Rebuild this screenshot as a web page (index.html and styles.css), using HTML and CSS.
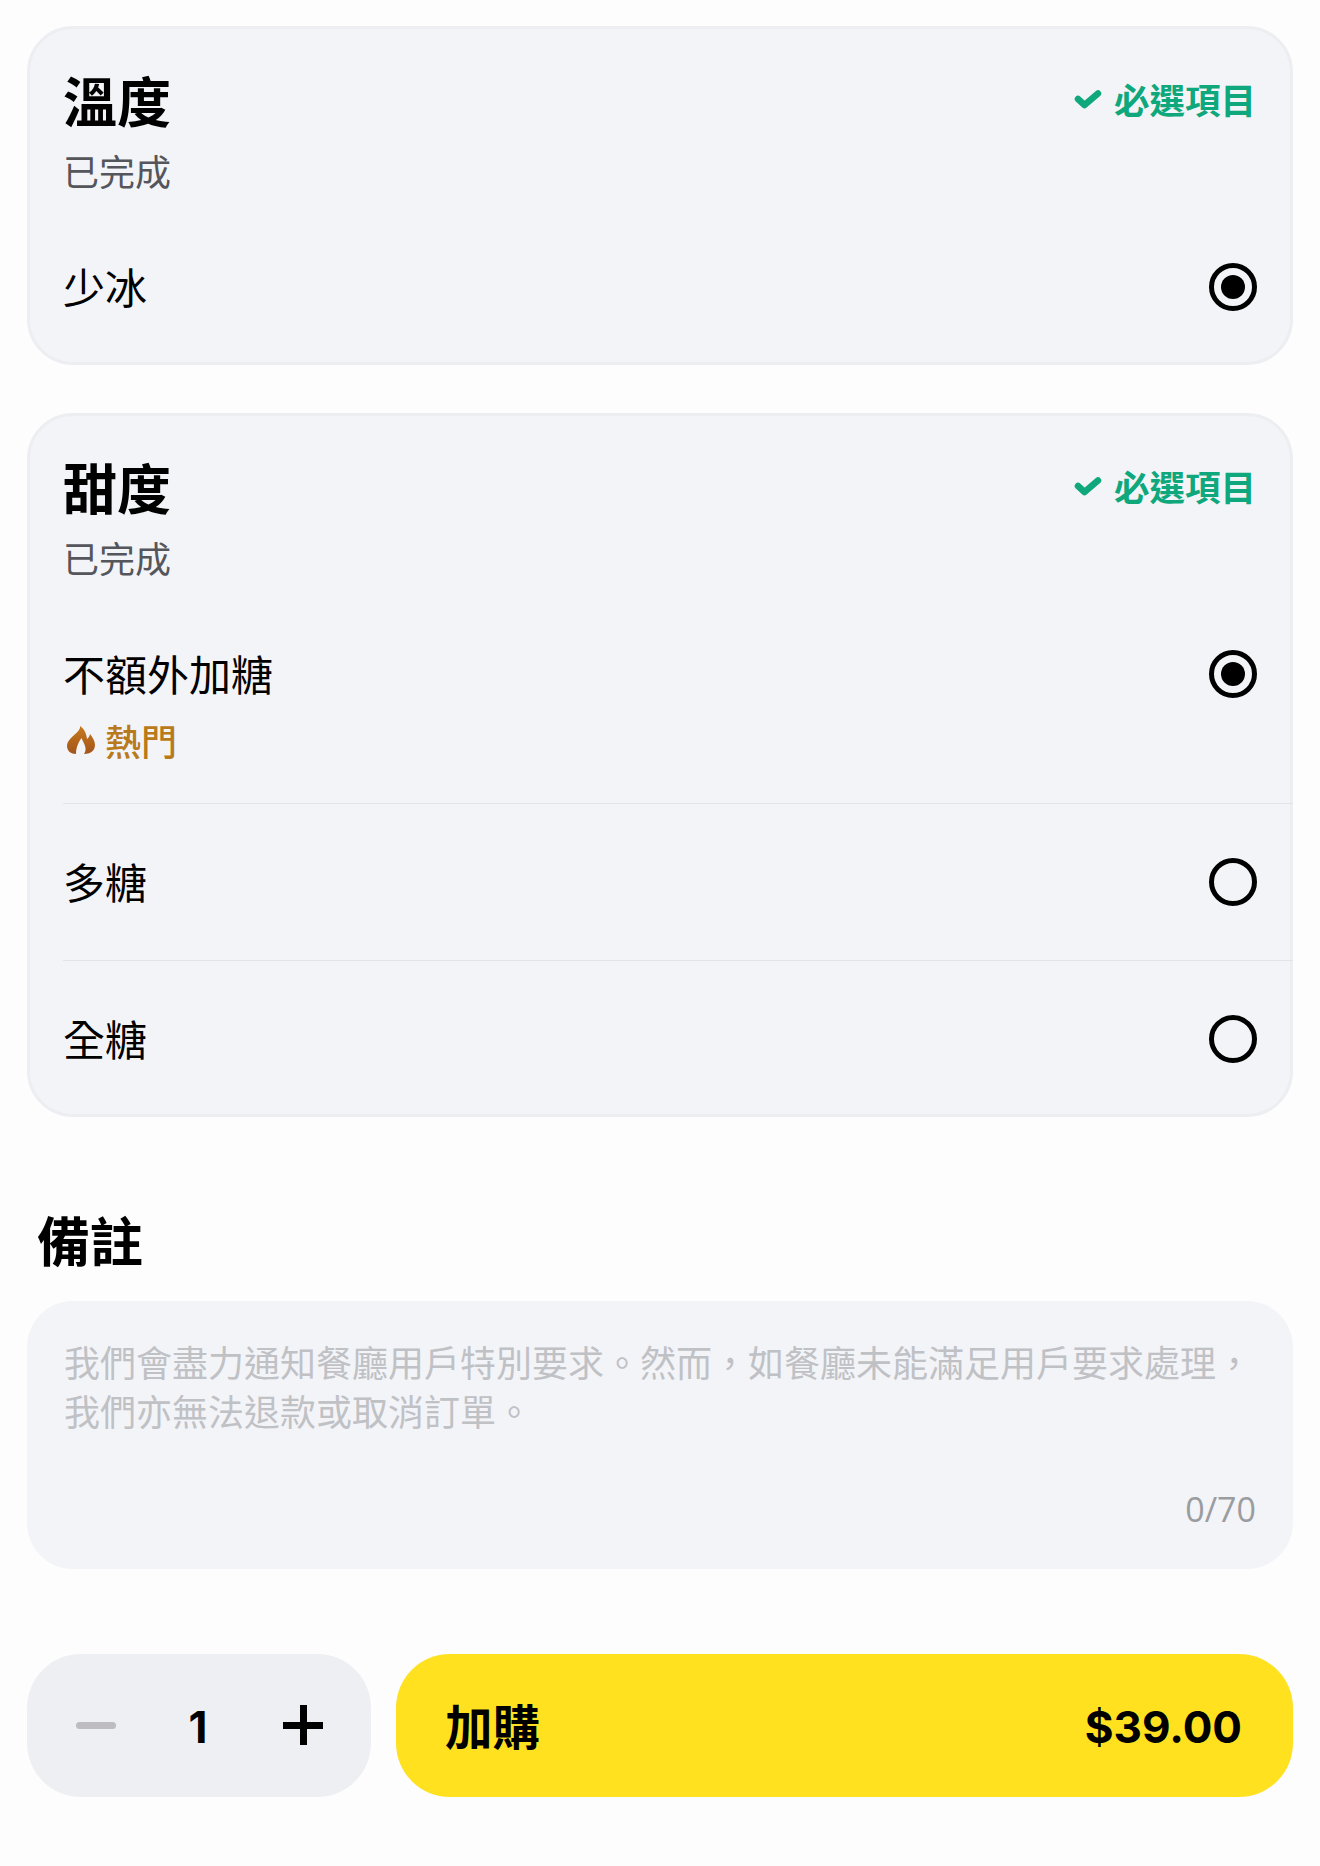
FILE: index.html
```html
<!DOCTYPE html>
<html lang="zh-Hant">
<head>
    <meta charset="UTF-8">
    <meta name="viewport" content="width=device-width, initial-scale=1.0">
    <title>加購</title>
    <link rel="stylesheet" href="styles.css">
</head>
<body>
    <section class="card">
        <div class="card-head">
            <div>
                <h2>溫度</h2>
                <p class="status">已完成</p>
            </div>
            <div class="required">
                <svg class="check" viewBox="0 0 28 20"><path d="M4 10 L10.5 16 L24 4.5" fill="none" stroke="#0fa87c" stroke-width="6.5" stroke-linecap="round" stroke-linejoin="round"/></svg>
                <span>必選項目</span>
            </div>
        </div>
        <div class="option first">
            <div class="option-text"><span class="name">少冰</span></div>
            <span class="radio on"></span>
        </div>
    </section>

    <section class="card">
        <div class="card-head">
            <div>
                <h2>甜度</h2>
                <p class="status">已完成</p>
            </div>
            <div class="required">
                <svg class="check" viewBox="0 0 28 20"><path d="M4 10 L10.5 16 L24 4.5" fill="none" stroke="#0fa87c" stroke-width="6.5" stroke-linecap="round" stroke-linejoin="round"/></svg>
                <span>必選項目</span>
            </div>
        </div>
        <div class="option tall">
            <div class="option-text">
                <span class="name">不額外加糖</span>
                <div class="hot">
                    <svg class="flame" viewBox="0 0 28 28">
                        <defs>
                            <linearGradient id="flame-fill" x1="0" y1="0" x2="0" y2="1">
                                <stop offset="0" stop-color="#c67a1c"/>
                                <stop offset="1" stop-color="#a3541a"/>
                            </linearGradient>
                        </defs>
                        <path d="M13 0 C14 4 8 8 4 12 C1.5 14.5 0 17 0 20 C0 25 4 28 9 28 C9 24 10 18 14.5 12 C15.5 15 18 18 18.5 22 C18.8 24.5 18 26.5 17 28 C23 28 28 25 28 19 C28 15 25.5 11 23 8 C22.5 10 21.5 12 20 13 C19.5 8 17.5 3 13 0 Z" fill="url(#flame-fill)"/>
                    </svg>
                    <span>熱門</span>
                </div>
            </div>
            <span class="radio on"></span>
        </div>
        <div class="option line">
            <div class="option-text"><span class="name">多糖</span></div>
            <span class="radio"></span>
        </div>
        <div class="option line">
            <div class="option-text"><span class="name">全糖</span></div>
            <span class="radio"></span>
        </div>
    </section>

    <h2 class="note-title">備註</h2>
    <div class="note">
        <p class="placeholder">我們會盡力通知餐廳用戶特別要求。然而&#xFF0C;如餐廳未能滿足用戶要求處理&#xFF0C;我們亦無法退款或取消訂單。</p>
        <div class="count">0/70</div>
    </div>

    <div class="bottom">
        <div class="stepper">
            <span class="minus"></span>
            <span class="qty">1</span>
            <span class="plus"></span>
        </div>
        <button class="buy">
            <span class="buy-label">加購</span>
            <span class="price">$39.00</span>
        </button>
    </div>
</body>
</html>
```

FILE: styles.css
```css
* {
    box-sizing: border-box;
}

body {
    font-family: "Noto Sans CJK TC", "Noto Sans", sans-serif;
    margin: 0;
    padding: 26px 27px 0;
    background-color: #fdfdfd;
    color: #000;
}

h2, p {
    margin: 0;
}

.card {
    background: #f3f4f8;
    border: 3px solid #eceef1;
    border-radius: 46px;
    margin-bottom: 48px;
    padding-left: 33px;
}

.card-head {
    display: flex;
    justify-content: space-between;
    align-items: flex-start;
    height: 180px;
    padding: 36px 34px 0 0;
}

.card-head h2 {
    font-size: 54px;
    font-weight: 700;
    line-height: 70px;
}

.status {
    font-size: 36px;
    line-height: 48px;
    margin-top: 11px;
    color: #55565b;
}

.required {
    display: flex;
    align-items: center;
    gap: 12px;
    height: 70px;
    margin-top: -2px;
    font-size: 35.5px;
    font-weight: 700;
    color: #0fa87c;
}

.check {
    width: 28px;
    height: 20px;
    margin-top: 2px;
}

.option {
    display: flex;
    justify-content: space-between;
    align-items: flex-start;
    height: 155px;
    padding: 52px 33px 0 0;
}

.option.first {
    height: 153px;
}

.option.tall {
    height: 207px;
}

.option.line {
    border-top: 1px solid #e2e4e9;
    height: 157px;
    margin-right: -3px;
    padding-right: 36px;
}

.option.line:last-child {
    height: 154px;
    border-top-color: #e2e4e9;
}

.name {
    display: block;
    font-size: 42px;
    line-height: 50px;
}

.hot {
    display: flex;
    align-items: center;
    gap: 10px;
    height: 50px;
    margin-top: 17px;
    font-size: 36px;
    font-weight: 500;
    color: #b97a1c;
}

.flame {
    width: 28px;
    height: 28px;
    margin-left: 4px;
}

.radio {
    width: 48px;
    height: 48px;
    margin-top: 2px;
    border: 5px solid #000;
    border-radius: 50%;
    display: flex;
    align-items: center;
    justify-content: center;
    flex-shrink: 0;
}

.radio.on::after {
    content: "";
    width: 24px;
    height: 24px;
    border-radius: 50%;
    background: #000;
}

.note-title {
    font-size: 53px;
    font-weight: 700;
    line-height: 70px;
    margin: 87px 0 27px 10px;
}

.note {
    background: #f3f4f8;
    border-radius: 46px;
    height: 268px;
    padding: 36px 37px 0;
}

.placeholder {
    font-size: 36px;
    line-height: 49px;
    height: 147px;
    color: #c0c1c5;
}

.count {
    font-family: "Open Sans", sans-serif;
    font-size: 34px;
    line-height: 50px;
    text-align: right;
    color: #9b9ca0;
}

.bottom {
    display: flex;
    gap: 25px;
    margin-top: 85px;
}

.stepper {
    width: 344px;
    height: 143px;
    background: #eeeff3;
    border-radius: 54px;
    position: relative;
    flex-shrink: 0;
}

/* the two stepper marks sit on top of the pill */
.minus {
    position: absolute;
    left: 49px;
    top: 68px;
    width: 40px;
    height: 7px;
    border-radius: 4px;
    background: #bcbcc1;
}

.plus {
    position: absolute;
    left: 256px;
    top: 51px;
    width: 40px;
    height: 40px;
    background:
        linear-gradient(#000, #000) center / 40px 7px no-repeat,
        linear-gradient(#000, #000) center / 7px 40px no-repeat;
    border-radius: 4px;
}

.qty {
    position: absolute;
    left: -1px;
    width: 344px;
    text-align: center;
    top: 43px;
    font-family: "Inter", sans-serif;
    font-size: 44px;
    font-weight: 700;
    line-height: 60px;
}

.buy {
    flex: 1;
    height: 143px;
    border: none;
    border-radius: 54px;
    background: #ffe11f;
    color: #000;
    font-family: inherit;
    font-size: 47.5px;
    font-weight: 700;
    display: flex;
    align-items: center;
    justify-content: space-between;
    padding: 0 51px 0 49px;
}

.buy-label {
    margin-bottom: 3px;
}

.price {
    font-family: "Inter", sans-serif;
    font-size: 44px;
    font-weight: 700;
    margin-top: 2px;
}
```
